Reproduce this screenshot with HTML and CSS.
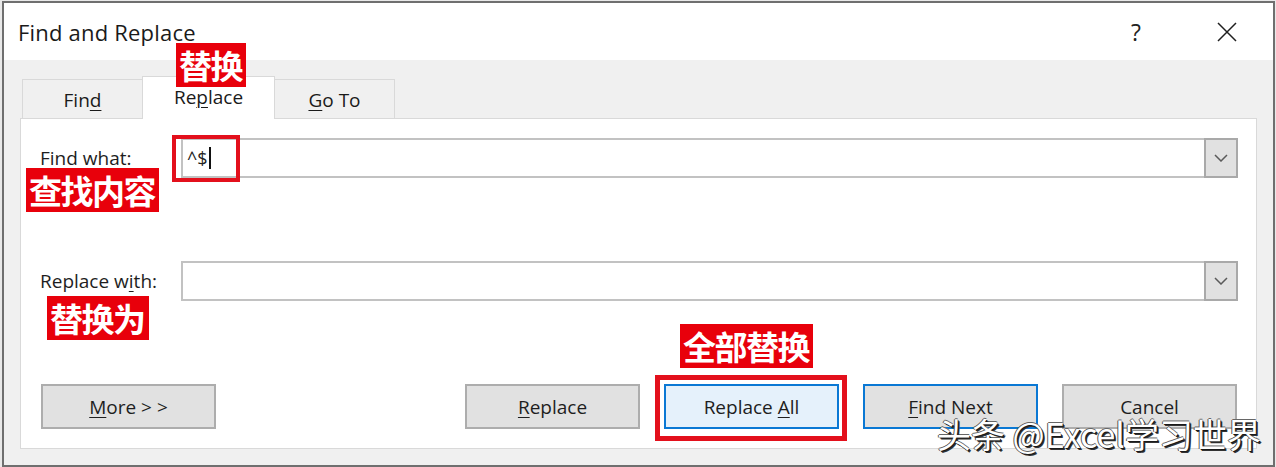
FILE: index.html
```html
<!DOCTYPE html>
<html lang="en">
<head>
<meta charset="utf-8">
<title>Find and Replace</title>
<link rel="stylesheet" href="styles.css">
</head>
<body>
<div class="dialog">
  <div class="titlebar">
    <span class="title">Find and Replace</span>
    <span class="help">?</span>
    <svg class="close" width="20" height="20" viewBox="0 0 20 20"><path d="M1 1 L19 19 M19 1 L1 19" stroke="#1f1f1f" stroke-width="1.5" fill="none"/></svg>
  </div>
  <div class="tabs">
    <div class="tab">Fin<u>d</u></div>
    <div class="tab active">Re<u>p</u>lace</div>
    <div class="tab"><u>G</u>o To</div>
  </div>
  <div class="panel">
    <div class="field-row">
      <label class="lbl">Fi<u>n</u>d what:</label>
      <div class="combo">
        <span class="value">^$</span><span class="caret"></span>
        <span class="drop"><svg width="14" height="8" viewBox="0 0 14 8"><path d="M1 1 L7 7 L13 1" stroke="#5a5a5a" stroke-width="1.5" fill="none"/></svg></span>
      </div>
    </div>
    <div class="field-row">
      <label class="lbl">Replace w<u>i</u>th:</label>
      <div class="combo">
        <span class="value"></span>
        <span class="drop"><svg width="14" height="8" viewBox="0 0 14 8"><path d="M1 1 L7 7 L13 1" stroke="#5a5a5a" stroke-width="1.5" fill="none"/></svg></span>
      </div>
    </div>
    <div class="buttons">
      <button class="btn more"><u>M</u>ore &gt; &gt;</button>
      <div class="right-btns">
        <button class="btn"><u>R</u>eplace</button>
        <button class="btn default">Replace <u>A</u>ll</button>
        <button class="btn focus"><u>F</u>ind Next</button>
        <button class="btn">Cancel</button>
      </div>
    </div>
    <span class="tag tag-find">查找内容</span>
    <span class="tag tag-with">替换为</span>
    <span class="tag tag-all">全部替换</span>
    <span class="hl hl-find"></span>
    <span class="hl hl-all"></span>
  </div>
  <span class="tag tag-tab">替换</span>
  <div class="watermark">头条 @Excel学习世界</div>
</div>
</body>
</html>
```

FILE: styles.css
```css
* { box-sizing: border-box; }
html, body { margin: 0; padding: 0; }
body {
  background: #e9e9e9;
  font-family: "Open Sans", "Noto Sans", sans-serif;
  color: #1a1a1a;
  width: 1276px;
  height: 467px;
  overflow: hidden;
}
.dialog {
  position: relative;
  margin: 1px 1px 0 2px;
  height: 466px;
  border: 2px solid #6f6f6f;
  background: #f0f0f0;
  display: flex;
  flex-direction: column;
}
.titlebar {
  height: 57px;
  background: #ffffff;
  display: flex;
  align-items: center;
  padding-left: 14px;
}
.title {
  font-size: 22px;
  line-height: 30px;
  color: #1a1a1a;
  flex: 1;
  letter-spacing: 0.2px;
}
.help {
  font-size: 23px;
  line-height: 30px;
  margin-right: 76px;
  color: #222;
}
.close { margin-right: 36px; }
.tabs {
  height: 58px;
  display: flex;
  align-items: flex-end;
  padding-left: 18px;
}
.tab {
  width: 121px;
  height: 39px;
  border: 1px solid #d9d9d9;
  border-bottom: none;
  background: #f0f0f0;
  font-size: 19px;
  display: flex;
  align-items: center;
  justify-content: center;
  padding-top: 2px;
}
.tab + .tab { margin-left: -1px; }
.tab.active {
  width: 133px;
  height: 43px;
  background: #ffffff;
  margin-bottom: -1px;
  position: relative;
  z-index: 1;
  padding-top: 0;
  padding-bottom: 2px;
}
u { text-decoration-thickness: 1px; text-underline-offset: 3px; }
.panel {
  position: relative;
  margin: 0 16px;
  height: 331px;
  background: #ffffff;
  border: 1px solid #d9d9d9;
  padding: 19px 18px 0 19px;
  display: flex;
  flex-direction: column;
  gap: 83px;
}
.field-row {
  display: grid;
  grid-template-columns: 141px 1fr;
  align-items: center;
  height: 40px;
}
.lbl { font-size: 19px; color: #1e1e1e; }
.combo {
  height: 40px;
  border: 2px solid #c2c2c2;
  display: flex;
  align-items: center;
  background: #fff;
}
.value {
  font-size: 18px;
  padding-left: 4px;
  color: #222;
}
.caret {
  width: 2px;
  height: 22px;
  background: #111;
  margin-left: 1px;
}
.drop {
  margin-left: auto;
  width: 34px;
  height: 40px;
  margin-right: -2px;
  border: 2px solid #a9a9a9;
  background: #e1e1e1;
  display: flex;
  align-items: center;
  justify-content: center;
}
.buttons {
  display: flex;
  justify-content: space-between;
  padding-left: 1px;
  padding-right: 1px;
}
.right-btns { display: flex; gap: 24px; }
.btn {
  width: 175px;
  height: 45px;
  font-family: "Open Sans", "Noto Sans", sans-serif;
  font-size: 19px;
  color: #1e1e1e;
  background: #e1e1e1;
  border: 2px solid #adadad;
  padding: 0;
}
.btn.default { background: #e5f1fb; border-color: #0a78d4; }
.btn.focus { border-color: #0a78d4; }
.tag {
  position: absolute;
  background: #e8000b;
  color: #ffffff;
  font-family: "Noto Sans CJK SC", sans-serif;
  font-weight: 700;
  font-size: 33px;
  letter-spacing: -1.5px;
  line-height: 44px;
  padding: 0 4px 0 3px;
  z-index: 2;
}
.tag-tab { left: 172px; top: 40px; }
.tag-find { left: 5px; top: 49px; }
.tag-with { left: 26px; top: 177px; }
.tag-all { left: 659px; top: 205px; }
.hl {
  position: absolute;
  border-style: solid;
  border-color: #e3101c;
  z-index: 2;
}
.hl-find { left: 151px; top: 16px; width: 68px; height: 47px; border-width: 4px; }
.hl-all { left: 634px; top: 256px; width: 192px; height: 66px; border-width: 5px; }
.watermark {
  position: absolute;
  left: 933px;
  top: 411px;
  font-family: "Noto Sans CJK SC", sans-serif;
  font-size: 34px;
  line-height: 40px;
  color: #ffffff;
  white-space: nowrap;
  z-index: 3;
  text-shadow: 1px 1px 0 #1a1a1a, 2px 2px 0 #333, -1px 0 0 #555, 0 -1px 0 #666;
}
```
